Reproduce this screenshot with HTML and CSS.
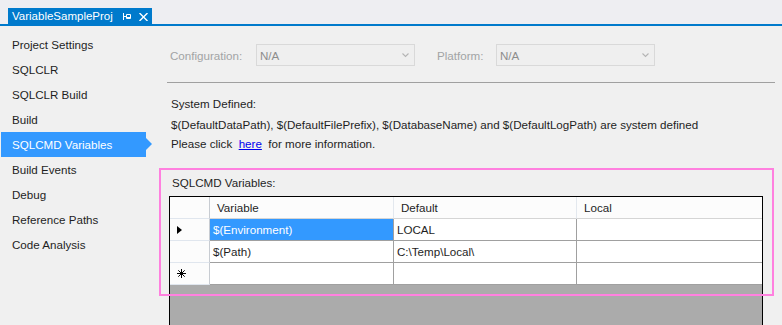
FILE: index.html
```html
<!doctype html>
<html lang="en">

<head>
    <meta charset="utf-8">
    <title>VariableSampleProj</title>
    <link rel="stylesheet" href="styles.css">
</head>

<body>
    <!-- document tab strip -->
    <div class="doc-tabs">
        <div class="doc-tab">
            <span class="doc-tab-title">VariableSampleProj</span>
            <svg class="tab-pin" width="8" height="7" viewBox="0 0 8 7">
                <path d="M0.5 0v7M0.5 3.5h3M3.5 1.5h4v4h-4z M3.5 4.5h4" stroke="#fff" stroke-width="1" fill="none" />
            </svg>
            <svg class="tab-close" width="9" height="8" viewBox="0 0 9 8">
                <path d="M0.5 0l8 8M8.5 0l-8 8" stroke="#fff" stroke-width="1.4" fill="none" />
            </svg>
        </div>
    </div>

    <div class="page">
        <!-- property pages -->
        <nav class="side">
            <div class="side-item">Project Settings</div>
            <div class="side-item">SQLCLR</div>
            <div class="side-item">SQLCLR Build</div>
            <div class="side-item">Build</div>
            <div class="side-item active">SQLCMD Variables</div>
            <div class="side-item">Build Events</div>
            <div class="side-item">Debug</div>
            <div class="side-item">Reference Paths</div>
            <div class="side-item">Code Analysis</div>
        </nav>

        <main class="content">
            <div class="config-row">
                <span class="config-label">Configuration:</span>
                <div class="combo combo-config">
                    <span>N/A</span>
                    <svg width="7" height="5" viewBox="0 0 7 5">
                        <path d="M0.5 0.5l3 3 3-3" stroke="#b4b4b4" stroke-width="1.1" fill="none" />
                    </svg>
                </div>
                <span class="config-label platform">Platform:</span>
                <div class="combo">
                    <span>N/A</span>
                    <svg width="7" height="5" viewBox="0 0 7 5">
                        <path d="M0.5 0.5l3 3 3-3" stroke="#b4b4b4" stroke-width="1.1" fill="none" />
                    </svg>
                </div>
            </div>

            <div class="sep"></div>

            <div class="sysdef">
                <p class="sysdef-title">System Defined:</p>
                <p>$(DefaultDataPath), $(DefaultFilePrefix), $(DatabaseName) and $(DefaultLogPath) are system defined</p>
                <p>Please click&nbsp; <a href="#" class="link">here</a>&nbsp; for more information.</p>
            </div>

            <section class="vars">
                <div class="vars-label">SQLCMD Variables:</div>
                <div class="grid">
                    <div class="cell rowhead head"></div>
                    <div class="cell head">Variable</div>
                    <div class="cell head">Default</div>
                    <div class="cell head last">Local</div>

                    <div class="cell rowhead">
                        <svg width="5" height="8" viewBox="0 0 5 8"><path d="M0 0l5 4-5 4z" fill="#000" /></svg>
                    </div>
                    <div class="cell selected">$(Environment)</div>
                    <div class="cell">LOCAL</div>
                    <div class="cell last"></div>

                    <div class="cell rowhead"></div>
                    <div class="cell">$(Path)</div>
                    <div class="cell">C:\Temp\Local\</div>
                    <div class="cell last"></div>

                    <div class="cell rowhead">
                        <svg width="9" height="9" viewBox="0 0 9 9">
                            <path d="M4.5 0v9M0 4.5h9M1.3 1.3l6.4 6.4M7.7 1.3l-6.4 6.4" stroke="#000" stroke-width="1" fill="none" />
                        </svg>
                    </div>
                    <div class="cell"></div>
                    <div class="cell"></div>
                    <div class="cell last"></div>
                </div>
                <!-- highlight annotation -->
                <div class="mark"></div>
            </section>
        </main>
    </div>
</body>

</html>
```

FILE: styles.css
```css
/* base */

html,
body {
    margin: 0;
    height: 100%;
    overflow: hidden;
}

body {
    background: #f0f0f0;
    font-family: "Liberation Sans", Arial, sans-serif;
    font-size: 11.6px;
    color: #1e1e1e;
}

/* document tabs */

.doc-tabs {
    height: 24px;
    background: #eeeef2;
    border-bottom: 2px solid #007acc;
    padding-left: 8px;
    display: flex;
    align-items: flex-end;
}

.doc-tab {
    height: 16px;
    width: 144px;
    background: #007acc;
    color: #fff;
    display: flex;
    align-items: center;
    padding: 0 0 0 4px;
    box-sizing: border-box;
}

.doc-tab-title {
    font-size: 11.5px;
    line-height: 16px;
}

.tab-pin {
    margin-left: 10px;
    margin-top: 1px;
}

.tab-close {
    margin-left: 8px;
    margin-top: 1px;
}

/* layout */

.page {
    display: flex;
}

.side {
    width: 152px;
    flex: none;
    padding-top: 6px;
}

.side-item {
    position: relative;
    width: 145px;
    height: 25px;
    line-height: 26px;
    margin-left: 1px;
    padding-left: 11px;
    box-sizing: border-box;
    white-space: nowrap;
}

.side-item.active {
    background: #3399ff;
    color: #fff;
}

.side-item.active::after {
    content: "";
    position: absolute;
    right: -6px;
    top: 6px;
    border-left: 6px solid #3399ff;
    border-top: 6px solid transparent;
    border-bottom: 6px solid transparent;
}

.content {
    flex: 1;
    padding-left: 15px;
    padding-right: 7px;
}

/* configuration bar */

.config-row {
    display: flex;
    align-items: center;
    margin-top: 18px;
    height: 22px;
}

.config-label {
    color: #a2a4a5;
    margin-left: 3px;
    width: 86px;
}

.config-label.platform {
    margin-left: 22px;
    width: 59px;
}

.combo {
    width: 159px;
    height: 22px;
    box-sizing: border-box;
    border: 1px solid #d9d9d9;
    background: #efefef;
    color: #8d8d8d;
    display: flex;
    align-items: center;
    justify-content: space-between;
    padding: 0 5px 0 3px;
}

.sep {
    height: 1px;
    background: #a0a0a0;
    margin-top: 16px;
}

/* system defined text */

.sysdef {
    margin-top: 11px;
    margin-left: 4px;
}

.sysdef p {
    margin: 0;
    line-height: 19px;
}

.sysdef-title {
    margin-bottom: 2px !important;
}

.link {
    color: #0000ee;
}

/* sqlcmd variables grid */

.vars {
    position: relative;
    margin-top: 21px;
}

.vars-label {
    margin-left: 5px;
    line-height: 18px;
}

.grid {
    margin-top: 4px;
    margin-left: 2px;
    width: 594px;
    height: 140px;
    box-sizing: border-box;
    border: 1px solid #000;
    border-bottom: none;
    background: #ababab;
    display: grid;
    grid-template-columns: 40px 184px 183px 185px;
    grid-template-rows: 22px 22px 22px 22px;
    align-content: start;
}

.cell {
    background: #fff;
    border-right: 1px solid #a0a0a0;
    border-bottom: 1px solid #a0a0a0;
    padding-left: 3px;
    display: flex;
    align-items: center;
    white-space: nowrap;
    overflow: hidden;
}

.cell.last {
    border-right: none;
}

.cell.head {
    background: #fcfcfc;
    border-right-color: #e3e8ee;
    border-bottom-color: #d5d5d5;
    padding-left: 7px;
}

.cell.rowhead {
    background: #fcfcfc;
    border-right-color: #c8ccd2;
    border-bottom-color: #e0e6ee;
    padding-left: 7px;
}

.cell.selected {
    background: #3399ff;
    color: #fff;
}

.mark {
    position: absolute;
    left: -8px;
    top: -6px;
    width: 615px;
    height: 128px;
    box-sizing: border-box;
    border: 2px solid #ff80df;
    pointer-events: none;
}
```
